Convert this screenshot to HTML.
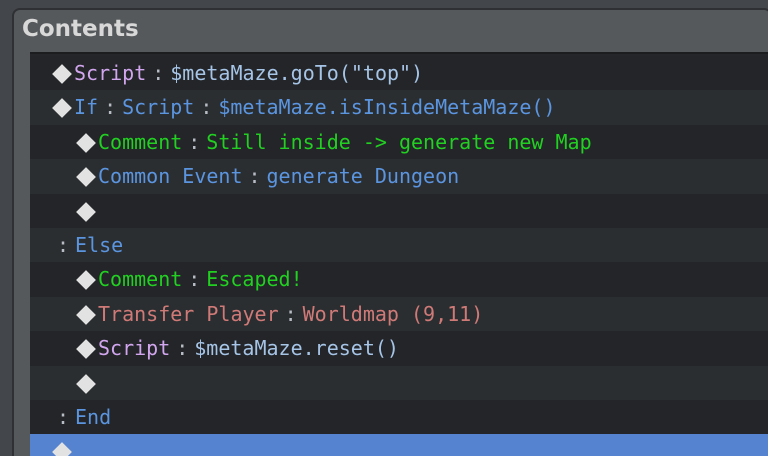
<!DOCTYPE html>
<html style="overflow:hidden;height:456px"><head><style>
body{margin:0;width:768px;height:456px;background:#43464a;overflow:hidden;position:relative;font-family:"DejaVu Sans Mono","Liberation Mono",monospace;}
.panel{position:absolute;left:12px;top:8px;width:760px;height:448px;background:#56595c;border:2px solid #2e3033;border-bottom:none;border-radius:8px 8px 0 0;box-sizing:border-box;}
.title{position:absolute;left:22px;top:16px;font-family:"DejaVu Sans","Liberation Sans",sans-serif;font-weight:bold;font-size:23px;color:#d8d8d8;}
.list{position:absolute;left:30px;top:52px;width:738px;height:404px;background:#242629;border-top:2px solid #1c1d1f;overflow:hidden;}
.row{position:absolute;left:0;width:738px;height:34.4px;line-height:34px;font-size:20px;white-space:pre;}
.a{background:#232528}.b{background:#2b2e31}.sel{background:#5683cf}
.d{display:inline-block;width:14px;height:14px;background:#e2e2e2;transform:rotate(45deg);margin:0 5px 0 3px;vertical-align:-1px;}
.c{display:inline-block;width:24px;text-align:center;color:#b8bcc4;}
.p{color:#d2a6ee}.v{color:#a6c4e6}.bl{color:#5b95e0}.g{color:#22d022}.r{color:#d07a78}
</style></head><body>
<div class="panel"></div>
<div class="title">Contents</div>
<div class="list">
<div class="row a" style="top:2px;padding-left:22px"><span class="d"></span><span class="p">Script</span><span class="c">:</span><span class="v">$metaMaze.goTo("top")</span></div>
<div class="row b" style="top:36.4px;padding-left:22px"><span class="d"></span><span class="bl">If</span><span class="c">:</span><span class="bl">Script</span><span class="c">:</span><span class="bl">$metaMaze.isInsideMetaMaze()</span></div>
<div class="row a" style="top:70.8px;padding-left:46px"><span class="d"></span><span class="g">Comment</span><span class="c">:</span><span class="g">Still inside -&gt; generate new Map</span></div>
<div class="row b" style="top:105.2px;padding-left:46px"><span class="d"></span><span class="bl">Common Event</span><span class="c">:</span><span class="bl">generate Dungeon</span></div>
<div class="row a" style="top:139.6px;padding-left:46px"><span class="d"></span></div>
<div class="row b" style="top:174px;padding-left:21px"><span class="c">:</span><span class="bl">Else</span></div>
<div class="row a" style="top:208.4px;padding-left:46px"><span class="d"></span><span class="g">Comment</span><span class="c">:</span><span class="g">Escaped!</span></div>
<div class="row b" style="top:242.8px;padding-left:46px"><span class="d"></span><span class="r">Transfer Player</span><span class="c">:</span><span class="r">Worldmap (9,11)</span></div>
<div class="row a" style="top:277.2px;padding-left:46px"><span class="d"></span><span class="p">Script</span><span class="c">:</span><span class="v">$metaMaze.reset()</span></div>
<div class="row b" style="top:311.6px;padding-left:46px"><span class="d"></span></div>
<div class="row a" style="top:346px;padding-left:21px"><span class="c">:</span><span class="bl">End</span></div>
<div class="row sel" style="top:380.4px;padding-left:22px"><span class="d"></span></div>
</div>
</body></html>
